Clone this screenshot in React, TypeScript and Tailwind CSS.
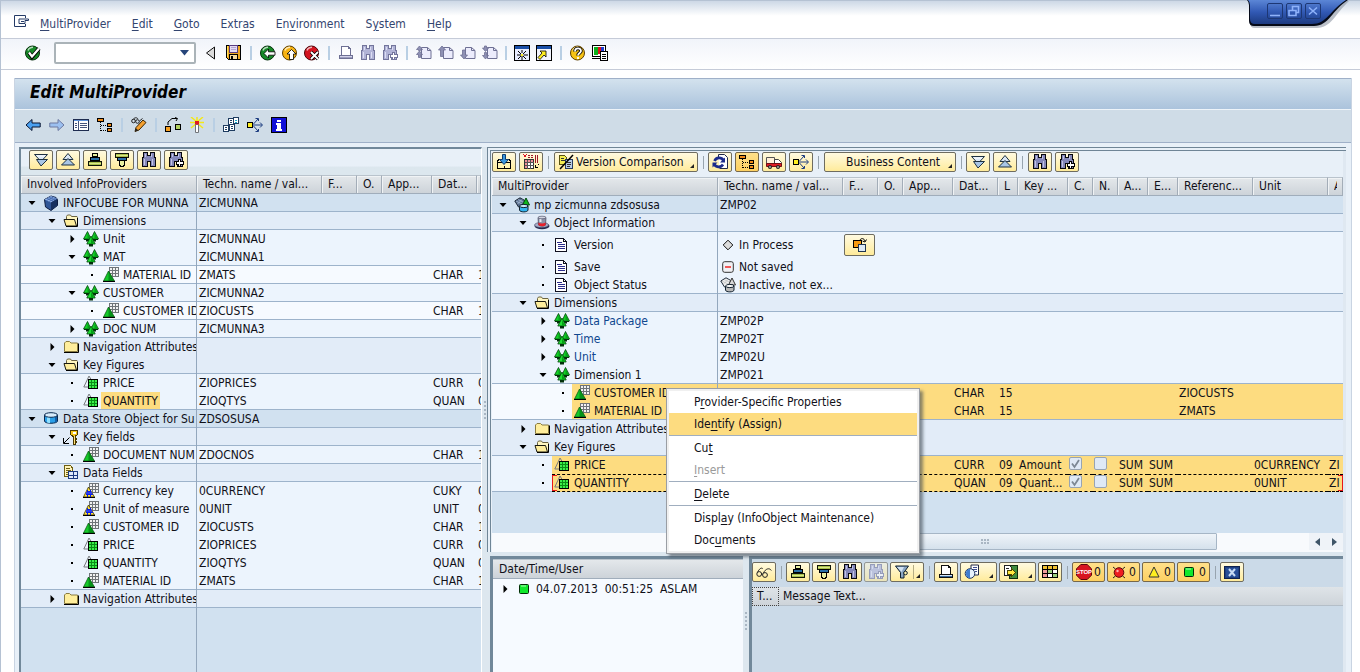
import React from 'react';

interface TreeRow {
  label: string;
  level: 0 | 1 | 2 | 3;
  icon: React.ReactNode;
  node: 'open' | 'closed' | 'leaf';
  tech?: React.ReactNode;
  cells?: Record<number, React.ReactNode>;
  selected?: boolean;
  focused?: boolean;
  marked?: boolean;
  link?: boolean;
  tall?: boolean;
}

const levelBg = ['bg-[#d1e1f0]', 'bg-[#e2ecf8]', 'bg-[#ecf4fd]', 'bg-[#f6faff]'];
const levelIndent = ['w-5', 'w-10', 'w-15', 'w-20'];

/* ---------- icons ---------- */

function Svg({ children, className = 'w-4 h-4', box = '0 0 16 16', smooth = false }: {
  children: React.ReactNode;
  className?: string;
  box?: string;
  smooth?: boolean;
}) {
  return (
    <svg
      viewBox={box}
      className={`shrink-0 ${className}`}
      fill="none"
      shapeRendering={smooth ? 'auto' : 'crispEdges'}
      aria-hidden="true"
    >
      {children}
    </svg>
  );
}

const CubeIcon = () => (
  <Svg smooth>
    <path d="M1.5 4.500L8 1l5 1.500 1.500 2v6L8 15.500 2.500 12z" fill="#2f5596" stroke="#0c1c40" />
    <path d="M1.500 4.500L8 1l6 2.500-6 4z" fill="#8fb0e6" />
    <path d="M4 3.300l6 2.700M6 2.200l6 2.600M3.500 5.500l7-3.500M6 6.500l7-3.500" stroke="#3c62a8" strokeWidth=".8" />
    <path d="M8 7.500v8l6-5V4z" fill="#16305f" />
  </Svg>
);

const FolderOpenIcon = () => (
  <Svg smooth>
    <path d="M3.500 12V3.500l1-1.500h3l1 1.500H14l.5 1V13" fill="#fff6c0" stroke="#6b6340" />
    <path d="M1 6.500h10.500L13.500 13H3z" fill="#ffee9c" stroke="#1a1a10" />
    <path d="M3 13.500h11.500V5" stroke="#000" />
  </Svg>
);

const FolderIcon = () => (
  <Svg smooth>
    <path d="M1.500 12.500V4l1.500-1.500h3.500L8 4h6.500v8.500z" fill="#ffee9c" stroke="#8a7c40" />
    <path d="M1 13.500h14.500V4.500" stroke="#000" />
  </Svg>
);

const DimensionIcon = () => (
  <Svg smooth>
    <path d="M4.500 .5L.500 8h7.500zM11.500 .5L8 8h7.500z" fill="#14d428" stroke="#02450a" strokeWidth=".8" />
    <path d="M4.500 2v6h3zM11.500 2v6h3.500z" fill="#07a018" />
    <path d="M1 8.500h14" stroke="#02300a" />
    <path d="M3 9h3v1.500H3zM10 9h3v1.500h-3z" fill="#02300a" />
    <path d="M8 5L3.800 13h8.400z" fill="#1ee032" stroke="#02450a" strokeWidth=".8" />
    <path d="M8 7v6h3.500z" fill="#07a018" />
    <path d="M6 13h4v2.500H6z" fill="#02300a" />
  </Svg>
);

const CharIcon = () => (
  <Svg>
    <path d="M6.500 .5h9v9h-9zM9.500 .5v9M12.500 .5v9M6.500 3.500h9M6.500 6.500h9" stroke="#6f7478" fill="#f2f2f2" />
    <g shapeRendering="auto">
      <path d="M5.500 4L.500 14h11z" fill="#16c92a" />
      <path d="M5.500 4v10h5.500z" fill="#06951a" />
      <path d="M5.500 4L.5 14h11z" stroke="#034a0c" strokeWidth=".7" />
    </g>
    <path d="M0 14.500h12" stroke="#000" />
  </Svg>
);

const UnitCharIcon = () => (
  <Svg>
    <path d="M6.500 .5h9v9h-9zM9.500 .5v9M12.500 .5v9M6.500 3.500h9M6.500 6.500h9" stroke="#6f7478" fill="#f2f2f2" />
    <path d="M5.500 4L.5 14h11z" fill="#ffe23a" stroke="#3a3200" strokeWidth=".8" shapeRendering="auto" />
    <path d="M4 8h4v1H4zM3 11h7v1H3zM4 6.500h1v7H4zM7 7h1v6.500H7z" fill="#0b1ee0" />
    <path d="M3 9h6v2H3z" fill="#2b3cf0" />
    <path d="M0 14.500h12" stroke="#000" />
  </Svg>
);

const KeyFigureIcon = () => (
  <Svg>
    <path d="M6 1L.8 12H6M6 1l3 5" stroke="#777b7e" shapeRendering="auto" />
    <path d="M5.500 4.500h9v9h-9z" fill="#0a8c16" stroke="#000" />
    <path d="M6 5h2v2H6zM9 5h2v2H9zM12 5h2v2h-2zM6 8h2v2H6zM9 8h2v2H9zM12 8h2v2h-2zM6 11h2v2H6zM9 11h2v2H9zM12 11h2v2h-2z" fill="#3cf04a" />
  </Svg>
);

const DataStoreIcon = () => (
  <Svg smooth>
    <path d="M1.500 4v6c0 3 13 3 13 0V4" fill="#2b9fe8" stroke="#0a2a50" />
    <path d="M4 5v6.500l3 .7V6z" fill="#8fe0ff" />
    <path d="M12 5v6.500l2-1V4z" fill="#145fa8" />
    <ellipse cx="8" cy="4" rx="6.500" ry="2.300" fill="#d8ecfb" stroke="#0a2a50" />
  </Svg>
);

const KeyIcon = () => (
  <Svg>
    <path d="M6.500 8.500L1 14M.5 9v5.500H6" stroke="#000" shapeRendering="auto" />
    <path d="M8 1.500h6l.5 1v3l-2 1.500H9.500L7.500 5.500v-3z" fill="#f5c518" stroke="#4a3800" />
    <path d="M10 3h3v1.500h-3z" fill="#fff" />
    <path d="M10.500 7v8h2v-2h1v-1h-1v-2h1V9h-1V7" fill="#ffe27a" stroke="#4a3800" />
  </Svg>
);

const DataFieldsIcon = () => (
  <Svg>
    <path d="M1.500 .5h6L9.500 3v8.500h-8z" fill="#fff3b8" stroke="#6e5e10" />
    <path d="M3 3.500h3.500M3 5.500h5M3 7.500h3M3 9.500h2" stroke="#6e5e10" />
    <path d="M5.500 6.500h9v7h-9zM10 6.500v7M5.500 10h9" fill="#dfe9fb" stroke="#1c3a80" />
  </Svg>
);

const MultiProviderIcon = ({ gray = false }: { gray?: boolean }) => (
  <Svg smooth>
    <path d="M.8 4L6 .8l4.500 2.500-1 5L4.500 10z" fill={gray ? '#f0f0f0' : '#5a7090'} stroke="#1d2838" />
    <path d="M2 4l6 3M4 2.500l6 3M8 2.500L3.500 7" stroke={gray ? '#bbb' : '#b6c8e0'} strokeWidth=".7" />
    <path d="M12 1l-3.500 7h7z" fill={gray ? '#d8d8d8' : '#10b81e'} stroke={gray ? '#333' : '#034a0c'} />
    <path d="M5.500 9v4c0 2.500 8.500 2.500 8.500 0V9" fill={gray ? '#b8b8b8' : '#33b4ee'} stroke="#10202e" />
    <ellipse cx="9.800" cy="9" rx="4.200" ry="1.600" fill={gray ? '#fafafa' : '#c9ecfb'} stroke="#10202e" />
  </Svg>
);

const HatIcon = () => (
  <Svg smooth>
    <ellipse cx="8" cy="11" rx="7.500" ry="3.300" fill="#23284c" />
    <ellipse cx="7.500" cy="10" rx="7" ry="2.600" fill="#a8aec8" stroke="#4a4f70" strokeWidth=".6" />
    <path d="M4 2.500L4.500 10c2 1.500 5.500 1.500 7 0l.5-7.500z" fill="#8d92a8" stroke="#3c4058" strokeWidth=".7" />
    <path d="M5.500 3v4h2V3z" fill="#e6e9f2" />
    <path d="M4.300 7.500l.2 2.700c2 1.500 5.500 1.500 7 0l.2-2.700c-2 1.200-5.500 1.200-7.400 0z" fill="#e8202c" />
    <ellipse cx="8" cy="2.500" rx="4" ry="1.300" fill="#d2d5e2" stroke="#3c4058" strokeWidth=".6" />
  </Svg>
);

const DocumentIcon = () => (
  <Svg>
    <path d="M1.500 1.500h8l3 3v10h-11z" fill="#fff" stroke="#101020" />
    <path d="M9.500 1.500v3h3" stroke="#101020" />
    <path d="M3 5.500h5M4 7.500h7M4 9.500h7M4 11.500h7" stroke="#2c2c8c" />
  </Svg>
);

const DiamondIcon = () => (
  <Svg smooth className="w-3 h-3" box="0 0 12 12">
    <path d="M6 1.200L10.800 6 6 10.800 1.200 6z" fill="#dcdcdc" stroke="#111" />
  </Svg>
);

const MinusBoxIcon = () => (
  <Svg smooth className="w-3 h-3" box="0 0 12 12">
    <rect x=".7" y=".7" width="10.600" height="10.600" rx="2" fill="#f0f0f4" stroke="#333" />
    <path d="M3 6h6" stroke="#f04848" strokeWidth="1.800" />
  </Svg>
);

const SwapIcon = () => (
  <Svg>
    <path d="M1.500 3.500h8v7h-8z" fill="#f79a10" stroke="#000" />
    <path d="M6.500 7.500h7v7h-7z" fill="#dce9f6" stroke="#1e3450" />
    <path d="M8 3c1-2 4-2 5 1M10.500 4l2.500 1 1.500-2.500" stroke="#000" shapeRendering="auto" />
  </Svg>
);

const ExpandAllIcon = () => (
  <Svg smooth>
    <path d="M1.500 2.500h13L8 9.500z" fill="#dbe8f6" stroke="#1d3040" />
    <path d="M3.500 7.500h11L8 14z" fill="#a8c6e6" stroke="#1d3040" />
    <path d="M4 4h8" stroke="#fff" />
  </Svg>
);

const CollapseAllIcon = () => (
  <Svg smooth>
    <path d="M8 1.500L13 7.500H3z" fill="#dbe8f6" stroke="#1d3040" />
    <path d="M8 6.500l6.500 6.500h-13z" fill="#a8c6e6" stroke="#1d3040" />
  </Svg>
);

const SortAscIcon = () => (
  <Svg>
    <path d="M5.500 1.500h5v3h-5z" fill="#e8f0a0" stroke="#000" />
    <path d="M3.500 5.500h9v3h-9z" fill="#2a6fa8" stroke="#000" />
    <path d="M1.500 9.500h13v4h-13z" fill="#a9c04a" stroke="#10140a" />
    <path d="M2 11h12" stroke="#dbe88c" />
  </Svg>
);

const SortDescIcon = () => (
  <Svg>
    <path d="M1.500 1.500h13v4h-13z" fill="#a9c04a" stroke="#10140a" />
    <path d="M2 3h12" stroke="#dbe88c" />
    <path d="M3.500 5.500h9v3h-9z" fill="#2a6fa8" stroke="#000" />
    <path d="M5.500 8.500h5V13h-1v1.500h-3V13h-1z" fill="#e8f0a0" stroke="#000" />
  </Svg>
);

const FindIcon = ({ plus = false, dim = false }: { plus?: boolean; dim?: boolean }) => (
  <Svg>
    <path
      d="M2.500 .5h4v3h3v-3h4v4l1 2v8h-5v-5h-3v5h-5v-8l1-2z"
      fill={dim ? '#b1b3d6' : '#8487b8'}
      stroke={dim ? '#73759c' : '#08080c'}
    />
    <path d="M3.500 7v6M4.500 2v3M11.500 7v6M10.500 2v3" stroke={dim ? '#dcdef4' : '#c2c4e4'} />
    {plus && (
      <path
        d="M10.500 7.500h2v2h2.500v2.500h-2.500v2.500h-2v-2.500H8V9.500h2.500z"
        fill="#fff"
        stroke={dim ? '#73759c' : '#000'}
      />
    )}
  </Svg>
);

const ImportIcon = () => (
  <Svg>
    <path d="M1.500 8.500h13v6h-13z" fill="#fff3b0" stroke="#000" />
    <path d="M1 8l2-3h2M15 8l-2-3h-2M8 12v3" stroke="#000" />
    <path d="M6.500 .5h3v5H12.500L8 10.500 3.500 5.500h3z" fill="#3a96dc" stroke="#0e3c70" shapeRendering="auto" />
  </Svg>
);

const FieldCatalogIcon = () => (
  <Svg>
    <path d="M1.500 5.500h9v9h-9z" fill="#fff" stroke="#333" />
    <path d="M2 6h2v8H2zM5 6h2v2H5zM8 6h2v2H8z" fill="#f09098" />
    <path d="M1.500 8.500h9M1.500 11.500h9M4.500 5.500v9M7.500 5.500v9" stroke="#555" />
    <path d="M.5 .5l3 3M3.500 .5l-3 3" stroke="#e01020" />
    <path d="M5 1.500h2M8 1.500h2M5 3.500h2M8 3.500h2M12.500 1v8M14.500 1v8" stroke="#a01828" />
    <path d="M12 13.500h3M12.500 11v3M15 10v1" stroke="#000" />
  </Svg>
);

const CompareIcon = () => (
  <Svg>
    <path d="M1.500 1.500h5l2 2v7h-7z" fill="#f4ee50" stroke="#5a5410" />
    <path d="M7.500 5.500h7v9h-7z" fill="#b9cde8" stroke="#263a60" />
    <path d="M3 4.500h3M3 6.500h4M9 8.500h4M9 10.500h4M9 12.500h3" stroke="#333" />
    <path d="M15 1L2 15" stroke="#000" strokeWidth="1.500" shapeRendering="auto" />
  </Svg>
);

const RefreshIcon = () => (
  <Svg smooth>
    <path d="M6.500 3.500V.5h6l3 3v11h-8" fill="#fff" stroke="#222a48" />
    <path d="M11.500 6.500A5 5 0 0 0 2.500 7M2 9.500a5 5 0 0 0 9 1" stroke="#1c2c8c" strokeWidth="2.600" />
    <path d="M13 3.500v5H8zM.5 13.500v-5h5z" fill="#1c2c8c" />
  </Svg>
);

const HierarchyIcon = () => (
  <Svg>
    <path d="M.5 1.500h6v3h-6z" fill="#f08a18" stroke="#000" />
    <path d="M3.500 5v8.500M4 8.500h6M4 13.500h6" stroke="#000" strokeDasharray="1 1" />
    <path d="M10.500 6.500h4v3h-4zM10.500 11.500h4v3h-4z" fill="#f08a18" stroke="#000" />
  </Svg>
);

const TruckIcon = () => (
  <Svg smooth>
    <path d="M.5 3.500h8v7h-8z" fill="#fff0d8" stroke="#555" />
    <path d="M8.500 5.500h4l3 3v3.500h-7z" fill="#fff" stroke="#444" />
    <path d="M.5 9.500h15v3H.5z" fill="#e01c24" stroke="#701014" />
    <circle cx="4" cy="13" r="2" fill="#222" />
    <circle cx="12" cy="13" r="2" fill="#222" />
    <circle cx="4" cy="13" r=".8" fill="#fff" />
    <circle cx="12" cy="13" r=".8" fill="#fff" />
  </Svg>
);

const SpreadIcon = () => (
  <Svg>
    <path d="M0 5h6v6H0z" fill="#000" />
    <path d="M1 6h4v4H1z" fill="#ffee20" />
    <g stroke="#1c3c80" shapeRendering="auto">
      <path d="M6 8h9M13 5.500L15.500 8 13 10.500M6.500 7l4.500-5M8.500 1.500h3V4M6.500 9l4.500 5M8.500 14.500h3V12" />
    </g>
  </Svg>
);

const GlassesIcon = () => (
  <Svg smooth>
    <g stroke="#222">
      <circle cx="3.200" cy="10" r="2.400" />
      <circle cx="9" cy="11" r="2.400" />
      <path d="M1.500 8.500C3 5 5.500 3 6.800 4.800M7.500 9c2-4.500 6-5.500 7.800-2.500M5.500 10h1.200" />
    </g>
  </Svg>
);

const FilterIcon = () => (
  <Svg smooth>
    <path d="M1.500 2h13L10 8.500V14H6.500V8.500z" fill="#8aa6c4" stroke="#10202e" />
    <path d="M3 3h7L7.500 8z" fill="#d2e2f2" />
    <circle cx="11.500" cy="9" r="1.800" stroke="#10202e" fill="#fff3b0" />
  </Svg>
);

const PrintIcon = ({ dim = false }: { dim?: boolean }) => (
  <Svg>
    <path d="M3.500 9.500v-8h7l2 2v6" fill="#fff" stroke={dim ? '#6e7094' : '#111'} />
    <path d="M10.500 1.500v2h2" stroke={dim ? '#6e7094' : '#111'} />
    <path d="M1.500 10.500h13v3h-13z" fill={dim ? '#d3d3ea' : '#d8e6f4'} stroke={dim ? '#6e7094' : '#111'} />
    <path d="M2 12.500h12" stroke={dim ? '#9c9ebe' : '#3a6c9c'} />
  </Svg>
);

const ViewIcon = () => (
  <Svg smooth>
    <path d="M7 1h7.500v10H7z" fill="#fff" stroke="#222a48" />
    <path d="M9 3.500h4M9 5.500h4M11 7.500h2" stroke="#3c4c8c" />
    <circle cx="6" cy="9.500" r="4.800" fill="#e8f2fc" stroke="#1c3460" />
    <path d="M6 9.500V4.800a4.800 4.800 0 0 0 0 9.500z" fill="#3f7cd0" />
  </Svg>
);

const ExportIcon = () => (
  <Svg>
    <path d="M6.500 1.500h8v13h-8z" fill="#3f8c3c" stroke="#0c2c0c" />
    <path d="M1.500 1.500h5l2 2v8h-7z" fill="#fff" stroke="#222" />
    <path d="M3 4.500h3" stroke="#222" />
    <path d="M4.500 6.500h4v-2l4 4-4 4v-2h-4z" fill="#ffe840" stroke="#4a4400" />
  </Svg>
);

const GridIcon = () => (
  <Svg>
    <path d="M.5 1.500h15v12H.5z" fill="#fff" />
    <path d="M1 2h14v3H1z" fill="#f0c030" />
    <path d="M1 6h4v7H1z" fill="#f09c9c" />
    <path d="M6 6h4v3H6zM11 10h4v3h-4z" fill="#9cd080" />
    <path d="M.5 1.500h15v12H.5zM.5 5.500h15M.5 9.500h15M5.500 1.500v12M10.500 1.500v12" stroke="#000" />
  </Svg>
);

const StopIcon = () => (
  <Svg smooth className="w-4 h-4">
    <path d="M4.800.5h6.400l4.300 4.300v6.400l-4.300 4.300H4.800L.5 11.200V4.800z" fill="#d81420" stroke="#5c060c" />
    <text x="8" y="10.300" fontSize="6" fontWeight="bold" fill="#fff" textAnchor="middle" fontFamily="Liberation Sans, sans-serif">STOP</text>
  </Svg>
);

const ErrorIcon = () => (
  <Svg smooth>
    <path d="M2 3l2.500 2M14 3l-2.500 2M2 14l2.500-2M14 14l-2.500-2" stroke="#222" />
    <circle cx="8" cy="8.500" r="4.800" fill="#ee1c20" stroke="#5c060c" />
    <circle cx="6.500" cy="7" r="1.200" fill="#ffb0b0" />
  </Svg>
);

const WarnIcon = () => (
  <Svg smooth>
    <path d="M8 3l5 10H3z" fill="#ffee20" stroke="#333" />
  </Svg>
);

const OkSquareIcon = () => (
  <Svg smooth>
    <rect x="3.500" y="3.500" width="9" height="9" rx="1" fill="#10e82c" stroke="#022c06" />
    <path d="M5 5h5" stroke="#b0ffb8" />
  </Svg>
);

const CloseLogIcon = () => (
  <Svg>
    <path d="M.5 2.500h15v12H.5z" fill="#1d3f80" stroke="#0e2250" />
    <path d="M2 4h12v9H2z" fill="#274f98" />
    <path d="M5 5l6 7M11 5l-6 7" stroke="#c8dcf4" strokeWidth="2" shapeRendering="auto" />
  </Svg>
);

const Ball = ({ color, dark, children }: { color: string; dark: string; children: React.ReactNode }) => (
  <Svg smooth>
    <circle cx="7.500" cy="8" r="7" fill={color} stroke={dark} />
    <path d="M3 5.500C4 3 6.500 2.300 8 2.300" stroke="#fff" strokeOpacity=".7" strokeWidth="1.400" />
    {children}
  </Svg>
);

const EnterIcon = () => (
  <Ball color="#178a28" dark="#06300c">
    <path d="M4 7.500l3 4.500 7-8.500" stroke="#000" strokeWidth="4" />
    <path d="M4 7.500l3 4 7-8" stroke="#fff" strokeWidth="2.200" />
  </Ball>
);

const GoBackIcon = () => (
  <Ball color="#178a28" dark="#06300c">
    <path d="M4 8.500l4.500-4.500v2.800h6.500v3.400H8.500V13z" fill="#fff" stroke="#000" strokeWidth=".8" />
  </Ball>
);

const GoExitIcon = () => (
  <Ball color="#f7b314" dark="#5c3e00">
    <path d="M9.500 4.500l4.500 4.500h-2.500v5.500h-4V9H5z" fill="#fff" stroke="#000" strokeWidth=".8" />
  </Ball>
);

const GoCancelIcon = () => (
  <Ball color="#d41420" dark="#4c0408">
    <path d="M7 7l7 7M14 7l-7 7" stroke="#000" strokeWidth="3.200" />
    <path d="M7 7l7 7M14 7l-7 7" stroke="#fff" strokeWidth="1.800" />
  </Ball>
);

const SaveIcon = () => (
  <Svg>
    <path d="M.5 .5h14v14H2.500l-2-2z" fill="#f0a820" stroke="#000" />
    <path d="M3.500 .5h8v7h-8z" fill="#e4dcf4" stroke="#5a3c80" />
    <path d="M5 2.500h5M5 4.500h5" stroke="#b4a4d4" />
    <path d="M3.500 9.500h8v5h-8z" fill="#f8dca0" stroke="#000" />
    <path d="M5 11h2v3H5z" fill="#000" />
    <path d="M1.500 1v11" stroke="#ffe060" />
  </Svg>
);

/* page with scroll arrow: first / previous / next / last */
const PageIcon = ({ arrow }: { arrow: string }) => (
  <Svg smooth>
    <path d="M5.500 2.500h6l3.500 3v8h-9.500z" fill="#ececfc" stroke="#6e7094" />
    <path d="M11.500 2.500v3H15" stroke="#6e7094" />
    <path d={arrow} fill="#8e90b4" stroke="#6e7094" strokeWidth=".8" />
  </Svg>
);

const NewSessionIcon = () => (
  <Svg>
    <path d="M.5 .5h15v15H.5z" fill="#e8ecff" stroke="#000" />
    <path d="M1 1h14v3H1z" fill="#1a4fa8" />
    <g shapeRendering="auto">
      <path d="M8 5v3M8 11v4M3 10h4M9.500 10H14M4 6l3 3M12 6L9 9M4 14l3-3M12 14l-3-3" stroke="#000" />
    </g>
    <path d="M7 9h2v2H7z" fill="#ffee20" />
  </Svg>
);

const ShortcutIcon = () => (
  <Svg>
    <path d="M.5 .5h15v15H.5z" fill="#f2f4fc" stroke="#000" />
    <path d="M1 1h14v3H1z" fill="#1a4fa8" />
    <path d="M4 6h6v6L8 10l-4 4.500L2 12.500 6 8z" fill="#ffee20" stroke="#000" strokeWidth=".8" shapeRendering="auto" />
  </Svg>
);

const HelpIcon = () => (
  <Ball color="#f7c314" dark="#5c3e00">
    <path d="M5 6.500C5 2.500 11 2.500 11 6c0 2-3 2-3 4.500" stroke="#000" strokeWidth="3.500" />
    <path d="M5 6.500C5 2.500 11 2.500 11 6c0 2-3 2-3 4.500M8 12v2" stroke="#fff" strokeWidth="1.800" />
  </Ball>
);

const LayoutIcon = () => (
  <Svg>
    <path d="M.5 .5h13v11H.5z" fill="#fff" stroke="#000" />
    <path d="M2 2h4v8H2z" fill="#0cb01c" />
    <path d="M6 2h3v7H6z" fill="#e0141c" />
    <path d="M9 2h3v5H9z" fill="#1c3cd0" />
    <path d="M0 13.500h8" stroke="#000" />
    <path d="M8.500 6.500h7v9h-7z" fill="#fff" stroke="#000" />
    <path d="M10 9.500h4M10 11.500h4M10 13.500h4" stroke="#000" />
  </Svg>
);

const ArrowIcon = ({ right = false, fill }: { right?: boolean; fill: string }) => (
  <Svg smooth>
    <path
      d={right ? 'M15 8l-6 5.500V10H.8V6H9V2.500z' : 'M1 8l6-5.500V6h8.200v4H7v3.500z'}
      fill={fill}
      stroke={right ? '#6c78a0' : '#0a1430'}
    />
  </Svg>
);

const ListIcon = () => (
  <Svg>
    <path d="M.5 2.500h15v11H.5z" fill="#fff" stroke="#1e2c50" />
    <path d="M1 3.500h14" stroke="#5c90d8" />
    <path d="M5.500 4v9M2 6.500h2M2 8.500h2M2 10.500h2M7 6.500h7M7 8.500h7M7 10.500h7" stroke="#44547c" />
  </Svg>
);

const ChangeIcon = () => (
  <Svg smooth>
    <circle cx="2.500" cy="4" r="1.800" stroke="#222" />
    <circle cx="6.500" cy="4.500" r="1.800" stroke="#222" />
    <path d="M2 2.500C4 0 6 .5 7 2M8.500 4l3-2.500" stroke="#222" />
    <path d="M4 14.500l1-4 7-7.500 3 2.500-7 7.500z" fill="#f4a030" stroke="#3c2400" />
    <path d="M4 14.500l.8-3.200 2.500 2z" fill="#222" />
  </Svg>
);

const TransferIcon = () => (
  <Svg>
    <path d="M.5 9.500h5v5h-5z" fill="#f7a020" stroke="#000" />
    <path d="M10.500 7.500h5v5h-5z" fill="#b0d060" stroke="#000" />
    <path d="M3 8V5l4-3.500h5M10 .5l2.500 1L11 4" stroke="#000" shapeRendering="auto" />
  </Svg>
);

const ActivateIcon = () => (
  <Svg smooth>
    <path d="M8 0v4M8 5L2 0M8 5l6-5M1 5.500h14M8 6l-6 5M8 6l6 5" stroke="#f4e818" strokeWidth="1.500" />
    <path d="M6.500 7.500h3v8h-3z" fill="#fff" stroke="#707478" />
    <path d="M6 4h4v3.500H6z" fill="#e01820" />
  </Svg>
);

const WhereUsedIcon = () => (
  <Svg>
    <path d="M5.500 1.500h5v6h-5zM10.500 .5h5v6h-5z" fill="#fff" stroke="#1e3c60" />
    <path d="M.5 8.500h5v6h-5zM6.500 7.500h5v6h-5z" fill="#fff" stroke="#1e3c60" />
    <path d="M12 3h2M12 5h2" stroke="#18a8c8" />
    <path d="M2 10.500h2M2 12.500h2M8 9.500h2M8 11.500h2M7 3.500h2M7 5.500h2" stroke="#1e3c60" />
  </Svg>
);

const InfoIcon = () => (
  <Svg>
    <path d="M.5 .5h15v15H.5z" fill="#1010d8" stroke="#000" />
    <path d="M6 3h4v2H6zM5 6h5v6h1v2H5v-2h1V8H5z" fill="#fff" />
  </Svg>
);

const MenuHandleIcon = () => (
  <Svg smooth>
    <path d="M11.500 4V1.500h-11v11h11V10" stroke="#243a66" />
    <path d="M5 5h9.500v1.500H11v3H5z" fill="#fff" stroke="#243a66" />
    <path d="M7 7.500h3" stroke="#243a66" />
  </Svg>
);

/* ---------- small parts ---------- */

function Mnemonic({ text, at }: { text: string; at: number }) {
  return (
    <>
      {text.slice(0, at)}
      <span className="underline underline-offset-2">{text[at]}</span>
      {text.slice(at + 1)}
    </>
  );
}

function BarButton({ label, children }: { label: string; children: React.ReactNode }) {
  return (
    <button type="button" aria-label={label} className="flex h-[22px] w-[22px] items-center justify-center">
      {children}
    </button>
  );
}

function BarSep({ gap = 'mx-[5px]' }: { gap?: string }) {
  return <span className={`h-[14px] w-[2px] bg-[#b9cfe4] ${gap}`} />;
}

function GoldButton({ label, wide = 'w-6', align = 'justify-center', pressed = false, dim = false, menu = false, children }: {
  label?: string;
  wide?: string;
  align?: string;
  pressed?: boolean;
  dim?: boolean;
  menu?: boolean;
  children: React.ReactNode;
}) {
  const fill = pressed
    ? 'border-[#77684a] from-[#ffe08a] to-[#fdd060]'
    : 'border-[#6e6c60] from-[#fffae0] to-[#ffeb9a]';
  return (
    <button
      type="button"
      aria-label={label}
      className={`relative flex h-5 shrink-0 items-center gap-[2px] rounded-[2px] border bg-linear-to-b ${align} ${fill} ${wide} ${dim ? 'opacity-60' : ''}`}
    >
      {children}
      {menu && (
        <svg viewBox="0 0 4 4" className="absolute right-[3px] bottom-[3px] h-1 w-1" aria-hidden="true">
          <path d="M4 0v4H0z" fill="#222" />
        </svg>
      )}
    </button>
  );
}

function GoldSep({ wide = 'w-[5px]' }: { wide?: string }) {
  return (
    <span className={`flex h-5 items-center justify-center ${wide}`}>
      <span className="h-[13px] w-px bg-[#98a4ae]" />
    </span>
  );
}

function NodeToggle({ node }: { node: TreeRow['node'] }) {
  if (node === 'leaf') {
    return <span className="flex w-[18px] justify-center"><span className="h-[2px] w-[2px] bg-black" /></span>;
  }
  return (
    <button type="button" aria-label={node === 'open' ? 'Collapse' : 'Expand'} className="flex w-[18px] justify-center">
      <svg viewBox="0 0 8 8" className="h-2 w-2" aria-hidden="true">
        <path d={node === 'open' ? 'M.5 2h7L4 6z' : 'M2.500 0v8L6.500 4z'} fill="#000" />
      </svg>
    </button>
  );
}

function CheckCell({ checked, label }: { checked: boolean; label: string }) {
  return (
    <span className="relative flex items-center">
      <input
        type="checkbox"
        aria-label={label}
        defaultChecked={checked}
        disabled
        className="h-[13px] w-[13px] appearance-none rounded-[2px] border border-[#98a4b2] bg-[#dfe9f5]"
      />
      {checked && (
        <svg viewBox="0 0 13 13" className="absolute left-0 h-[13px] w-[13px]" fill="none" aria-hidden="true">
          <path d="M3 6.500l2.500 3.500L10 3" stroke="#7d8894" strokeWidth="1.800" />
        </svg>
      )}
    </span>
  );
}

function HeadCell({ children }: { children?: React.ReactNode }) {
  return (
    <th
      scope="col"
      className="h-[19px] overflow-hidden border-t border-r border-b border-t-[#b9c3cc] border-r-[#a3adb8] border-b-[#a0adbb] bg-linear-to-b from-[#e4e8eb] to-[#cdd3d9] p-0 pl-[6px] text-left leading-[17px] font-normal whitespace-nowrap shadow-[inset_1px_1px_0_#f0f3f5]"
    >
      {children}
    </th>
  );
}

function TreeTable({ name, heads, widths, rows }: {
  name: string;
  heads: React.ReactNode[];
  widths: string[];
  rows: TreeRow[];
}) {
  return (
    <table aria-label={name} className="w-full table-fixed border-separate border-spacing-0">
      <colgroup>
        {heads.map((_, i) => <col key={i} className={widths[i]} />)}
      </colgroup>
      <thead>
        <tr>
          {heads.map((h, i) => <HeadCell key={i}>{h}</HeadCell>)}
        </tr>
      </thead>
      <tbody>
        {rows.map((row, i) => {
          const next = rows[i + 1];
          const bg = levelBg[row.level];
          const line = !next || next.level !== row.level ? 'border-b border-[#9db3cb]' : '';
          const fill = row.selected ? 'bg-[#fddc80]' : bg;
          const dash = row.focused ? 'border-y border-dashed border-black' : line;
          const height = row.tall ? 'h-[26px]' : 'h-[18px]';
          // the focused row already has a border above its text
          const text = row.focused || row.tall ? 'leading-4' : 'pt-px leading-4';
          const align = row.tall ? 'align-middle' : 'align-top';
          return (
            <tr key={i} className={height}>
              <td className={`overflow-hidden border-r border-[#93a7bd] p-0 ${bg}`}>
                <div className={`flex ${height}`}>
                  <div className={`flex shrink-0 items-center justify-end ${levelIndent[row.level]} ${line}`}>
                    <NodeToggle node={row.node} />
                  </div>
                  <div className={`relative flex min-w-0 flex-1 items-center gap-1 overflow-hidden pl-[2px] whitespace-nowrap ${fill} ${dash}`}>
                    {row.focused && <span className="absolute inset-y-0 left-0 w-[5px] border-y border-l border-[#e81818]" />}
                    {row.icon}
                    <span className={`${text} ${row.tall ? '' : 'self-stretch'} ${row.link ? 'text-[#0f478f]' : ''} ${row.marked ? '-ml-[2px] bg-[#fddc80] px-[2px]' : ''}`}>
                      {row.label}
                    </span>
                  </div>
                </div>
              </td>
              <td className={`overflow-hidden p-0 pl-[2px] whitespace-nowrap ${align} ${fill} ${dash}`}>
                <div className={text}>{row.tech}</div>
              </td>
              {heads.slice(2).map((_, c) => (
                <td key={c} className={`relative p-0 pl-px whitespace-nowrap ${align} ${fill} ${dash}`}>
                  <div className={text}>{row.cells?.[c + 2]}</div>
                  {row.focused && c === heads.length - 3 && (
                    <span className="absolute inset-y-0 right-0 w-[5px] border-y border-r border-[#e81818]" />
                  )}
                </td>
              ))}
            </tr>
          );
        })}
      </tbody>
    </table>
  );
}

function StatusText({ icon, children }: { icon: React.ReactNode; children: React.ReactNode }) {
  return (
    <span className="flex h-4 items-center">
      <span className="flex w-[19px] shrink-0 items-center justify-center pr-[3px]">{icon}</span>
      {children}
    </span>
  );
}

/* ---------- data ---------- */

const providerHeads = ['Involved InfoProviders', 'Techn. name / val...', 'F...', 'O.', 'App...', 'Dat...', ''];
const providerWidths = ['w-[176px]', 'w-[125px]', 'w-[35px]', 'w-[25px]', 'w-[50px]', 'w-[45px]', ''];

const providerRows: TreeRow[] = [
  { label: 'INFOCUBE FOR MUNNA', level: 0, icon: <CubeIcon />, node: 'open', tech: 'ZICMUNNA' },
  { label: 'Dimensions', level: 1, icon: <FolderOpenIcon />, node: 'open' },
  { label: 'Unit', level: 2, icon: <DimensionIcon />, node: 'closed', tech: 'ZICMUNNAU' },
  { label: 'MAT', level: 2, icon: <DimensionIcon />, node: 'open', tech: 'ZICMUNNA1' },
  { label: 'MATERIAL ID', level: 3, icon: <CharIcon />, node: 'leaf', tech: 'ZMATS', cells: { 5: 'CHAR', 6: '1' } },
  { label: 'CUSTOMER', level: 2, icon: <DimensionIcon />, node: 'open', tech: 'ZICMUNNA2' },
  { label: 'CUSTOMER ID', level: 3, icon: <CharIcon />, node: 'leaf', tech: 'ZIOCUSTS', cells: { 5: 'CHAR', 6: '1' } },
  { label: 'DOC NUM', level: 2, icon: <DimensionIcon />, node: 'closed', tech: 'ZICMUNNA3' },
  { label: 'Navigation Attributes', level: 1, icon: <FolderIcon />, node: 'closed' },
  { label: 'Key Figures', level: 1, icon: <FolderOpenIcon />, node: 'open' },
  { label: 'PRICE', level: 2, icon: <KeyFigureIcon />, node: 'leaf', tech: 'ZIOPRICES', cells: { 5: 'CURR', 6: '0' } },
  { label: 'QUANTITY', level: 2, icon: <KeyFigureIcon />, node: 'leaf', tech: 'ZIOQTYS', cells: { 5: 'QUAN', 6: '0' }, marked: true },
  { label: 'Data Store Object for Su', level: 0, icon: <DataStoreIcon />, node: 'open', tech: 'ZDSOSUSA' },
  { label: 'Key fields', level: 1, icon: <KeyIcon />, node: 'open' },
  { label: 'DOCUMENT NUM', level: 2, icon: <CharIcon />, node: 'leaf', tech: 'ZDOCNOS', cells: { 5: 'CHAR', 6: '1' } },
  { label: 'Data Fields', level: 1, icon: <DataFieldsIcon />, node: 'open' },
  { label: 'Currency key', level: 2, icon: <UnitCharIcon />, node: 'leaf', tech: '0CURRENCY', cells: { 5: 'CUKY', 6: '0' } },
  { label: 'Unit of measure', level: 2, icon: <UnitCharIcon />, node: 'leaf', tech: '0UNIT', cells: { 5: 'UNIT', 6: '0' } },
  { label: 'CUSTOMER ID', level: 2, icon: <CharIcon />, node: 'leaf', tech: 'ZIOCUSTS', cells: { 5: 'CHAR', 6: '1' } },
  { label: 'PRICE', level: 2, icon: <KeyFigureIcon />, node: 'leaf', tech: 'ZIOPRICES', cells: { 5: 'CURR', 6: '0' } },
  { label: 'QUANTITY', level: 2, icon: <KeyFigureIcon />, node: 'leaf', tech: 'ZIOQTYS', cells: { 5: 'QUAN', 6: '0' } },
  { label: 'MATERIAL ID', level: 2, icon: <CharIcon />, node: 'leaf', tech: 'ZMATS', cells: { 5: 'CHAR', 6: '1' } },
  { label: 'Navigation Attributes', level: 1, icon: <FolderIcon />, node: 'closed' },
];

const multiHeads = [
  'MultiProvider', 'Techn. name / val...', 'F...', 'O.', 'App...', 'Dat...', 'L', 'Key ...',
  'C.', 'N.', 'A...', 'E...', 'Referenc...', 'Unit',
  <span className="block w-[3px] overflow-hidden">A</span>,
];
const multiWidths = [
  'w-[226px]', 'w-[125px]', 'w-[35px]', 'w-[25px]', 'w-[50px]', 'w-[45px]', 'w-[20px]', 'w-[50px]',
  'w-[25px]', 'w-[25px]', 'w-[30px]', 'w-[30px]', 'w-[75px]', 'w-[75px]', '',
];

const swapButton = (
  <button
    type="button"
    aria-label="Switch version"
    className="absolute top-[2px] left-px z-10 flex h-[22px] w-[31px] items-center justify-center rounded-[2px] border border-[#6e6c60] bg-linear-to-b from-[#fffae0] to-[#ffeb9a]"
  >
    <SwapIcon />
  </button>
);

const multiRows: TreeRow[] = [
  { label: 'mp zicmunna zdsosusa', level: 0, icon: <MultiProviderIcon />, node: 'open', tech: 'ZMP02' },
  { label: 'Object Information', level: 1, icon: <HatIcon />, node: 'open' },
  { label: 'Version', level: 2, icon: <DocumentIcon />, node: 'leaf', tall: true, tech: <StatusText icon={<DiamondIcon />}>In Process</StatusText>, cells: { 2: swapButton } },
  { label: 'Save', level: 2, icon: <DocumentIcon />, node: 'leaf', tech: <StatusText icon={<MinusBoxIcon />}>Not saved</StatusText> },
  { label: 'Object Status', level: 2, icon: <DocumentIcon />, node: 'leaf', tech: <StatusText icon={<MultiProviderIcon gray />}>Inactive, not ex...</StatusText> },
  { label: 'Dimensions', level: 1, icon: <FolderOpenIcon />, node: 'open' },
  { label: 'Data Package', level: 2, icon: <DimensionIcon />, node: 'closed', tech: 'ZMP02P', link: true },
  { label: 'Time', level: 2, icon: <DimensionIcon />, node: 'closed', tech: 'ZMP02T', link: true },
  { label: 'Unit', level: 2, icon: <DimensionIcon />, node: 'closed', tech: 'ZMP02U', link: true },
  { label: 'Dimension 1', level: 2, icon: <DimensionIcon />, node: 'open', tech: 'ZMP021' },
  { label: 'CUSTOMER ID', level: 3, icon: <CharIcon />, node: 'leaf', selected: true, cells: { 5: 'CHAR', 6: '15', 12: 'ZIOCUSTS' } },
  { label: 'MATERIAL ID', level: 3, icon: <CharIcon />, node: 'leaf', selected: true, cells: { 5: 'CHAR', 6: '15', 12: 'ZMATS' } },
  { label: 'Navigation Attributes', level: 1, icon: <FolderIcon />, node: 'closed' },
  { label: 'Key Figures', level: 1, icon: <FolderOpenIcon />, node: 'open' },
  {
    label: 'PRICE', level: 2, icon: <KeyFigureIcon />, node: 'leaf', selected: true,
    cells: {
      5: 'CURR', 6: '09', 7: 'Amount', 8: <CheckCell checked label="PRICE C." />, 9: <CheckCell checked={false} label="PRICE N." />,
      10: 'SUM', 11: 'SUM', 13: '0CURRENCY', 14: 'ZI',
    },
  },
  {
    label: 'QUANTITY', level: 2, icon: <KeyFigureIcon />, node: 'leaf', selected: true, focused: true,
    cells: {
      5: 'QUAN', 6: '09', 7: 'Quant...', 8: <CheckCell checked label="QUANTITY C." />, 9: <CheckCell checked={false} label="QUANTITY N." />,
      10: 'SUM', 11: 'SUM', 13: '0UNIT', 14: 'ZI',
    },
  },
];

const menus = [
  { text: 'MultiProvider', at: 0 },
  { text: 'Edit', at: 0 },
  { text: 'Goto', at: 0 },
  { text: 'Extras', at: 4 },
  { text: 'Environment', at: 2 },
  { text: 'System', at: 1 },
  { text: 'Help', at: 0 },
];

const contextItems = [
  { text: 'Provider-Specific Properties', at: 1 },
  { text: 'Identify (Assign)', at: 3, active: true, split: true },
  { text: 'Cut', at: 2 },
  { text: 'Insert', at: 0, disabled: true, split: true },
  { text: 'Delete', at: 0, split: true },
  { text: 'Display (InfoObject Maintenance)', at: 5 },
  { text: 'Documents', at: 3 },
];

/* ---------- sections ---------- */

function WindowButtons() {
  return (
    <div className="absolute top-0 right-[10px] h-[28px] w-[103px]">
      <svg viewBox="0 0 103 28" className="absolute inset-0 h-[28px] w-[103px]" aria-hidden="true">
        <defs>
          <linearGradient id="tab" x1="0" y1="0" x2="0" y2="1">
            <stop offset="0" stopColor="#5b86d6" />
            <stop offset=".5" stopColor="#3159b4" />
            <stop offset="1" stopColor="#1c3a80" />
          </linearGradient>
        </defs>
        <path d="M2 2l1 21q0 5 5 5h62c14 0 18-14 32-27z" fill="#8e96a4" opacity=".6" />
        <path d="M0 0q2 2 2 5v16q0 5 5 5h60c15 0 18-16 34-26z" fill="#050a18" />
        <path d="M1 0q2 2 2 5v14q0 5 5 5h57c15 0 18-14 34-24z" fill="url(#tab)" />
      </svg>
      <div className="relative flex gap-[3px] pt-[3px] pl-5 text-[#8fb2fa]">
        {[
          { label: 'Minimize', d: 'M3 12.500h10' },
          { label: 'Restore', d: 'M3 7.500h7v5H3zM6.500 7V3.500h6v6H10' },
          { label: 'Close', d: 'M4 4.500l8 7M12 4.500l-8 7' },
        ].map((b) => (
          <button key={b.label} type="button" aria-label={b.label} className="h-4 w-4 rounded-[2px] border border-[#1d3774]">
            <svg viewBox="1 1 14 14" className="h-[14px] w-[14px]" fill="none" stroke="currentColor" strokeWidth="1.600" aria-hidden="true">
              <path d={b.d} />
            </svg>
          </button>
        ))}
      </div>
    </div>
  );
}

function CommandBar() {
  return (
    <div className="flex h-[31px] items-center border-b border-[#c5cbd8] bg-linear-to-b from-[#f1f4fa] to-white pb-[2px] pl-[21px]">
      <BarButton label="Enter"><EnterIcon /></BarButton>
      <div className="ml-[10px] flex h-[22px] w-[142px] items-center rounded-[2px] border-2 border-[#aab3b8] bg-white">
        <input type="text" aria-label="Command" className="h-full w-full min-w-0 px-1 outline-none" />
        <button type="button" aria-label="Command history" className="mr-[5px]">
          <svg viewBox="0 0 9 6" className="h-[6px] w-[9px]" aria-hidden="true"><path d="M0 0h9L4.500 5.500z" fill="#26457a" /></svg>
        </button>
      </div>
      <button type="button" aria-label="Hide command field" className="mr-[7px] ml-[9px]">
        <Svg smooth className="h-[14px] w-[11px]" box="0 0 11 14"><path d="M9.500 1v12L1.500 7z" fill="#dcdcdc" stroke="#111" /></Svg>
      </button>
      <BarButton label="Save"><SaveIcon /></BarButton>
      <BarSep />
      <BarButton label="Back"><GoBackIcon /></BarButton>
      <BarButton label="Exit"><GoExitIcon /></BarButton>
      <BarButton label="Cancel"><GoCancelIcon /></BarButton>
      <BarSep />
      <BarButton label="Print"><PrintIcon dim /></BarButton>
      <BarButton label="Find"><FindIcon dim /></BarButton>
      <BarButton label="Find next"><FindIcon plus dim /></BarButton>
      <BarSep />
      <BarButton label="First page"><PageIcon arrow="M3.500 1l3 3.500h-2v1h-2v-1h-2zM3.500 6l3 3.500h-2v3h-2v-3h-2z" /></BarButton>
      <BarButton label="Previous page"><PageIcon arrow="M4 1l3.500 4h-2v6.500h-3V5h-2z" /></BarButton>
      <BarButton label="Next page"><PageIcon arrow="M4 14L.500 10h2V5h3v5h2z" /></BarButton>
      <BarButton label="Last page"><PageIcon arrow="M3.500 6.500l-3-3.500h2V1h2v2h2zM3.500 14l-3-3.500h2v-3h2v3h2z" /></BarButton>
      <BarSep gap="mx-[4px]" />
      <BarButton label="New session"><NewSessionIcon /></BarButton>
      <BarButton label="Create shortcut"><ShortcutIcon /></BarButton>
      <BarSep />
      <BarButton label="Help"><HelpIcon /></BarButton>
      <BarButton label="Customize layout"><LayoutIcon /></BarButton>
    </div>
  );
}

function ContextMenu() {
  return (
    <div
      role="menu"
      className="absolute top-[237px] left-[175px] z-20 w-[254px] border border-[#9a9ea4] bg-[#f0f0f0] p-[2px] shadow-[3px_3px_3px_rgba(60,70,80,0.6)]"
    >
      <div className="bg-white">
        {contextItems.map((item) => (
          <div key={item.text} className={item.split ? 'mb-px border-b border-[#a0aebf]' : ''}>
            <button
              type="button"
              role="menuitem"
              disabled={item.disabled}
              className={`block h-[22px] w-full pl-[25px] text-left ${item.active ? 'bg-[#fddc80]' : ''} ${item.disabled ? 'text-[#9a9a9a]' : ''}`}
            >
              <Mnemonic text={item.text} at={item.at} />
            </button>
          </div>
        ))}
      </div>
    </div>
  );
}

function Grip() {
  return (
    <div className="flex flex-col gap-[2px]">
      {[0, 1, 2, 3, 4].map((i) => <span key={i} className="h-[2px] w-[2px] bg-[#a9b6c3]" />)}
    </div>
  );
}

function ProviderPanel() {
  return (
    <section className="flex w-[463px] shrink-0 flex-col overflow-hidden border-t-2 border-r border-l-2 border-t-[#71889a] border-r-white border-l-[#71889a] bg-[#d1e1f0]">
      <div className="flex h-[26px] gap-[3px] bg-linear-to-b from-[#e8f0f8] from-65% to-[#dce7ee] to-70% pt-px pl-2">
        <GoldButton label="Expand subtree"><ExpandAllIcon /></GoldButton>
        <GoldButton label="Collapse subtree"><CollapseAllIcon /></GoldButton>
        <GoldButton label="Sort ascending"><SortAscIcon /></GoldButton>
        <GoldButton label="Sort descending"><SortDescIcon /></GoldButton>
        <GoldButton label="Find"><FindIcon /></GoldButton>
        <GoldButton label="Find next"><FindIcon plus /></GoldButton>
      </div>
      <TreeTable name="Involved InfoProviders" heads={providerHeads} widths={providerWidths} rows={providerRows} />
      <div className="w-[176px] flex-1 border-r border-[#93a7bd]" />
    </section>
  );
}

function MultiPanel() {
  return (
    <section className="relative border-t-4 border-l-4 border-double border-[#6f8596] bg-[#e8f0f8] pl-px">
      <div className="border-r-[3px] border-[#dfe8f1]">
        <div className="flex h-[26px] gap-[3px] pt-px">
          <GoldButton label="Import"><ImportIcon /></GoldButton>
          <GoldButton label="Field catalog"><FieldCatalogIcon /></GoldButton>
          <GoldSep />
          <GoldButton wide="w-36" align="pl-[3px]" menu><CompareIcon />Version Comparison</GoldButton>
          <GoldSep wide="w-1" />
          <GoldButton label="Refresh"><RefreshIcon /></GoldButton>
          <GoldButton label="Hierarchy" pressed><HierarchyIcon /></GoldButton>
          <GoldButton label="Transport"><TruckIcon /></GoldButton>
          <GoldButton label="Where-used"><SpreadIcon /></GoldButton>
          <GoldSep />
          <GoldButton wide="w-[132px]" menu><span className="pl-[6px]">Business Content</span></GoldButton>
          <GoldSep wide="w-1" />
          <GoldButton label="Expand subtree"><ExpandAllIcon /></GoldButton>
          <GoldButton label="Collapse subtree"><CollapseAllIcon /></GoldButton>
          <GoldSep />
          <GoldButton label="Find"><FindIcon /></GoldButton>
          <GoldButton label="Find next"><FindIcon plus /></GoldButton>
        </div>
        <div className="overflow-hidden">
          <TreeTable name="MultiProvider" heads={multiHeads} widths={multiWidths} rows={multiRows} />
        </div>
        <div className="h-[41px] bg-[#d1e1f0]" />
        <div className="flex h-[19px] items-stretch bg-[#f8fafd] pb-[2px]">
          <div className="w-[261px] shrink-0" />
          <div className="flex w-[464px] items-center justify-center rounded-[1px] border border-[#a6b6c6] bg-linear-to-b from-[#eff4f9] to-[#d5e1ec]">
            <div className="grid grid-cols-3 gap-px">
              {[0, 1, 2, 3, 4, 5].map((i) => <span key={i} className="h-[2px] w-[2px] bg-[#a9b6c3]" />)}
            </div>
          </div>
          <div className="flex-1" />
          <button type="button" aria-label="Scroll left" className="flex w-[17px] items-center justify-center bg-[#eff3f8]">
            <svg viewBox="0 0 5 8" className="h-2 w-[5px]" aria-hidden="true"><path d="M5 0v8L0 4z" fill="#3f5568" /></svg>
          </button>
          <button type="button" aria-label="Scroll right" className="flex w-[17px] items-center justify-center bg-[#eff3f8]">
            <svg viewBox="0 0 5 8" className="h-2 w-[5px]" aria-hidden="true"><path d="M0 0v8l5-4z" fill="#3f5568" /></svg>
          </button>
        </div>
      </div>
      <ContextMenu />
    </section>
  );
}

function LogPanels() {
  return (
    <section className="flex flex-1">
      <div className="ml-[3px] flex w-[253px] shrink-0 flex-col border-t-[3px] border-l-[3px] border-[#71889a] bg-[#f6faff]">
        <h2 className="h-5 border-y border-t-[#b9c3cc] border-b-[#a0adbb] bg-linear-to-b from-[#e4e8eb] to-[#cdd3d9] pl-[6px] leading-[18px]">
          Date/Time/User
        </h2>
        <div className="flex h-5 items-center">
          <span className="flex w-[23px] justify-center"><NodeToggle node="closed" /></span>
          <OkSquareIcon />
          <span className="pl-1 whitespace-pre">04.07.2013  00:51:25  ASLAM</span>
        </div>
      </div>
      <div className="flex w-[6px] justify-center pt-[56px]"><Grip /></div>
      <div className="flex min-w-0 flex-1 flex-col border-t-[3px] border-l-[3px] border-[#71889a] bg-[#cbdae8]">
        <div className="flex h-[28px] gap-[2px] pt-[3px]">
          <GoldButton label="Details"><GlassesIcon /></GoldButton>
          <GoldSep wide="w-[6px]" />
          <GoldButton label="Sort ascending"><SortAscIcon /></GoldButton>
          <GoldButton label="Sort descending"><SortDescIcon /></GoldButton>
          <GoldButton label="Find"><FindIcon /></GoldButton>
          <GoldButton label="Find next" dim><FindIcon plus dim /></GoldButton>
          <GoldButton label="Filter" wide="w-[34px]" align="pl-[3px]" menu>
            <FilterIcon />
            <span className="ml-px h-[14px] w-px bg-[#b5ad84]" />
          </GoldButton>
          <GoldSep wide="w-[6px]" />
          <GoldButton label="Print"><PrintIcon /></GoldButton>
          <GoldButton label="Views" wide="w-[37px]" align="pl-[3px]" menu><ViewIcon /></GoldButton>
          <GoldButton label="Export" wide="w-[37px]" align="pl-[3px]" menu><ExportIcon /></GoldButton>
          <GoldButton label="Layout"><GridIcon /></GoldButton>
          <GoldSep wide="w-[6px]" />
          <GoldButton wide="w-[33px]" pressed><StopIcon />0</GoldButton>
          <GoldButton wide="w-[33px]" pressed><ErrorIcon />0</GoldButton>
          <GoldButton wide="w-[33px]" pressed><WarnIcon />0</GoldButton>
          <GoldButton wide="w-[33px]" pressed><OkSquareIcon />0</GoldButton>
          <GoldSep wide="w-[6px]" />
          <GoldButton label="Close log"><CloseLogIcon /></GoldButton>
        </div>
        <table aria-label="Messages" className="w-full table-fixed border-separate border-spacing-0 bg-linear-to-b from-[#dfe4e8] to-[#cdd3d9]">
          <thead>
            <tr>
              <th scope="col" className="h-[19px] w-[27px] border border-dotted border-[#444] p-0 pl-1 text-left leading-[17px] font-normal">T...</th>
              <th scope="col" className="h-[19px] border-b border-[#b4bec8] p-0 pl-1 text-left leading-[17px] font-normal">Message Text...</th>
            </tr>
          </thead>
        </table>
      </div>
      <div className="w-[3px] bg-[#dfe8f1]" />
    </section>
  );
}

export default function App() {
  return (
    <div className="relative flex min-h-screen flex-col overflow-hidden border-l border-[#b5c2d3] bg-white font-['DejaVu_Sans_Condensed','DejaVu_Sans',sans-serif] text-[12px] leading-[18px] text-[#101018]">
      {/* Menu bar */}
      <header>
        <nav className="flex h-[39px] items-center gap-[21px] border-t border-b border-t-[#b5c2d3] border-b-[#c5cbd8] bg-linear-to-b from-[#cdd8e6] to-white to-40% pt-[8px] pl-[13px] text-[#33456f]">
          <span className="-mr-[11px] pb-1"><MenuHandleIcon /></span>
          {menus.map((m) => (
            <a key={m.text} href="#"><Mnemonic text={m.text} at={m.at} /></a>
          ))}
        </nav>
        <CommandBar />
      </header>
      <WindowButtons />

      <main className="mt-2 mr-2 ml-[13px] flex flex-1 flex-col border-x border-[#c9d4e2] bg-[#e8f0f8]">
        {/* Title and application toolbar */}
        <div className="border-y border-[#9fb0c8] bg-[#cfdce7]">
          <h1 className="h-[31px] border-b border-[#eef4f9] bg-linear-to-b from-[#d3e2ee] to-[#abc3dc] pl-[15px] text-[17px] leading-[27px] font-bold text-black italic">
            Edit MultiProvider
          </h1>
          <div className="flex h-8 items-center gap-[2px] pb-[3px] pl-[7px]">
            <BarButton label="Other object back"><ArrowIcon fill="#4aa0f0" /></BarButton>
            <BarButton label="Other object forward"><ArrowIcon right fill="#9cc0f0" /></BarButton>
            <BarButton label="Object list"><ListIcon /></BarButton>
            <BarButton label="Object tree"><HierarchyIcon /></BarButton>
            <BarSep gap="mx-[3px]" />
            <BarButton label="Display / change"><ChangeIcon /></BarButton>
            <BarSep gap="mx-[3px]" />
            <BarButton label="Transfer"><TransferIcon /></BarButton>
            <BarButton label="Activate"><ActivateIcon /></BarButton>
            <BarSep gap="mx-[3px]" />
            <BarButton label="Where-used list"><WhereUsedIcon /></BarButton>
            <BarButton label="Data flow"><SpreadIcon /></BarButton>
            <BarButton label="Information"><InfoIcon /></BarButton>
          </div>
        </div>

        {/* Work area */}
        <div className="flex flex-1 pt-1 pr-[5px] pl-1">
          <ProviderPanel />
          <div className="flex w-[5px] flex-col items-center justify-center bg-[#dde7ef]"><Grip /></div>
          <div className="flex min-w-0 flex-1 flex-col bg-[#dde7ef]">
            <MultiPanel />
            <div className="h-1" />
            <LogPanels />
          </div>
        </div>
      </main>
    </div>
  );
}
